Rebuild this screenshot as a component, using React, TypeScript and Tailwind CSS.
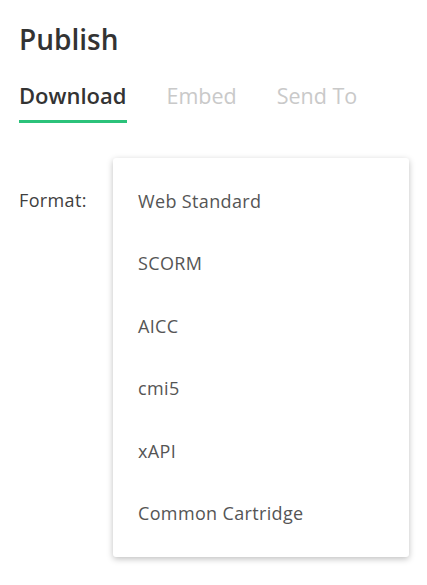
const formats = ['Web Standard', 'SCORM', 'AICC', 'cmi5', 'xAPI', 'Common Cartridge'];

const tabs = [
  { label: 'Download', active: true },
  { label: 'Embed', active: false },
  { label: 'Send To', active: false },
];

export default function App() {
  return (
    <div
      className="min-h-[585px] w-[427px] bg-white pl-[19px]"
      style={{ fontFamily: '"Open Sans", sans-serif' }}
    >
      <h1 className="pt-[20px] text-[28px] leading-[38px] font-semibold text-[#333333]">Publish</h1>

      {/* tabs */}
      <div className="mt-[22px] flex gap-[40px]">
        {tabs.map((t) =>
          t.active ? (
            <div
              key={t.label}
              className="border-b-[3px] border-[#2bc27a] pb-[10px] text-[22px] leading-[30px] font-semibold text-[#333333]"
            >
              {t.label}
            </div>
          ) : (
            <div key={t.label} className="pb-[10px] pt-[1px] text-[21.5px] leading-[30px] text-[#c9c9c9]">
              {t.label}
            </div>
          )
        )}
      </div>

      <div className="mt-[35px] flex">
        <div className="w-[94px] pt-[30px] text-[18px] leading-[25px] tracking-[0.35px] text-[#404040]">Format:</div>
        <div className="w-[296px] rounded-[3px] bg-white py-[12px] shadow-[0_2px_6px_rgba(0,0,0,0.25)]">
          {formats.map((f) => (
            <div
              key={f}
              className="flex h-[62.5px] items-center pl-[25px] text-[18px] leading-[25px] tracking-[0.35px] text-[#555555]"
            >
              {f}
            </div>
          ))}
        </div>
      </div>
    </div>
  );
}
